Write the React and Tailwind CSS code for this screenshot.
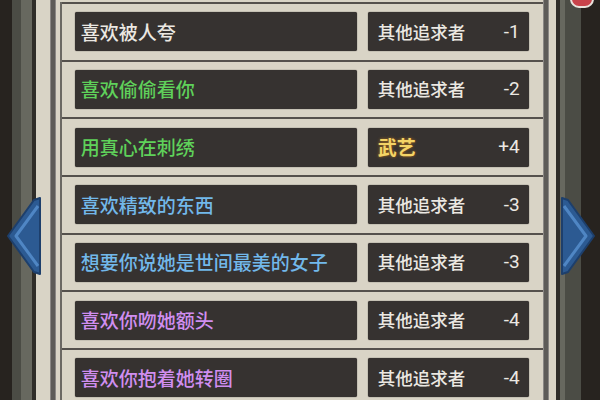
import React from 'react';

const rows = [
  { text: '喜欢被人夸', color: 'text-[#ebe8e2]', who: '其他追求者', delta: '-1' },
  { text: '喜欢偷偷看你', color: 'text-[#5fd15a]', who: '其他追求者', delta: '-2' },
  { text: '用真心在刺绣', color: 'text-[#5fd15a]', who: '武艺', delta: '+4', gold: true },
  { text: '喜欢精致的东西', color: 'text-[#72b8ea]', who: '其他追求者', delta: '-3' },
  { text: '想要你说她是世间最美的女子', color: 'text-[#72b8ea]', who: '其他追求者', delta: '-3' },
  { text: '喜欢你吻她额头', color: 'text-[#d08ef0]', who: '其他追求者', delta: '-4' },
  { text: '喜欢你抱着她转圈', color: 'text-[#d08ef0]', who: '其他追求者', delta: '-4' },
];

function SideArrow({ dir }) {
  const left = dir === 'left';
  return (
    <svg width="38" height="80" viewBox="0 0 38 80" className={`absolute top-[196px] ${left ? 'left-[4px]' : 'right-[2px]'}`}>
      <g transform={left ? '' : 'translate(38 0) scale(-1 1)'}>
        <path d="M36 2 L30 4 L4 40 L30 76 L36 78 Z" fill="#2c5a92" stroke="#1d3f6c" strokeWidth="2" strokeLinejoin="round" />
        <path d="M34 10 L12 40 L34 70" fill="none" stroke="#4f86c4" strokeWidth="3" strokeLinejoin="round" />
      </g>
    </svg>
  );
}

export default function App() {
  return (
    <div
      className="relative w-[600px] h-[400px] overflow-hidden flex bg-[#24211f]"
      style={{ fontFamily: '"Noto Sans CJK SC", "Noto Sans", sans-serif' }}
    >
      {/* left frame */}
      <div className="w-[13px] bg-[#27231f]" />
      <div className="w-[9px] bg-[#4b4c45]" />
      <div className="w-[12px] bg-[#67685f]" />
      <div className="w-[4px] bg-[#2f2d29]" />

      {/* paper panel */}
      <div className="flex-1 flex bg-[#d9d4c6]">
        <div className="w-[14px]" />
        <div className="w-[6px] bg-[#5d5b58] border-x border-[#8a8784]" />
        <div className="flex-1 flex flex-col pt-[2px] pl-[4px]">
          <div className="border-l-2 border-[#6b6863] flex-1 flex flex-col">
            {rows.map((r, i) => (
              <div
                key={i}
                className="flex items-center gap-[11px] h-[57.7px] pl-[13px] pr-[14px] border-t-2 border-[#55514d] shrink-0"
              >
                <div className="w-[282px] h-[39px] bg-[#363230] rounded-[2px] flex items-center px-[6px] shadow-[0_0_1px_#1a1816]">
                  <span className={`text-[19px] font-medium ${r.color}`}>{r.text}</span>
                </div>
                <div className="w-[161px] h-[39px] bg-[#363230] rounded-[2px] flex items-center justify-between pl-[10px] pr-[9px] shadow-[0_0_1px_#1a1816]">
                  {r.gold ? (
                    <span className="text-[19px] font-bold text-[#f4d466] [text-shadow:0_0_3px_#b0721c]">{r.who}</span>
                  ) : (
                    <span className="text-[17.5px] font-medium text-[#ebe8e2]">{r.who}</span>
                  )}
                  <span className="text-[19px] text-[#ebe8e2]" style={{ fontFamily: 'Roboto, "Liberation Sans", sans-serif' }}>{r.delta}</span>
                </div>
              </div>
            ))}
          </div>
        </div>
        <div className="w-[6px] bg-[#5d5b58] border-x border-[#8a8784]" />
        <div className="w-[7px]" />
      </div>

      {/* right frame */}
      <div className="w-[4px] bg-[#2f2d29]" />
      <div className="w-[6px] bg-[#67685f]" />
      <div className="w-[17px] bg-[#4b4c45]" />
      <div className="w-[20px] bg-[#27231f]" />

      <div className="absolute right-[6px] top-[-10px] w-[24px] h-[18px] rounded-full bg-[#c8434b] border-2 border-[#e9e2dc]" />

      <SideArrow dir="left" />
      <SideArrow dir="right" />
    </div>
  );
}
